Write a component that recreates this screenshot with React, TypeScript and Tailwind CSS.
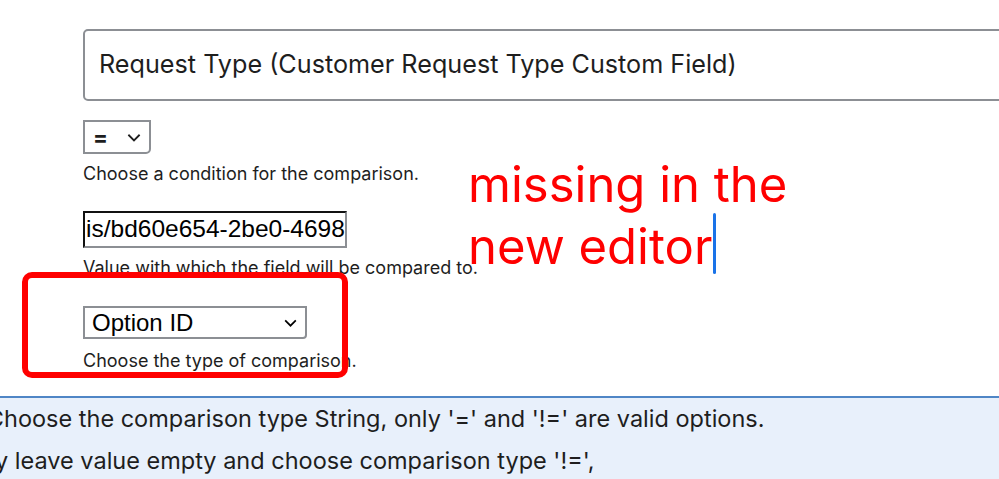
const Chevron = ({ className }: { className?: string }) => (
  <svg viewBox="0 0 16 16" className={className} fill="none" stroke="currentColor" strokeWidth="1.6">
    <path d="M3 6l5 5 5-5" />
  </svg>
);

// prefix that overflows to the left of the notice edge (text is cut in the screenshot)
const Cut = ({ children }: { children: string }) => (
  <span className="flex w-0 justify-end">{children}</span>
);

export default function App() {
  return (
    <div className="relative h-[479px] w-[999px] overflow-hidden bg-white font-['Inter',sans-serif] text-[#1e1e1e]">
      <div className="pl-[83px] pt-[29px]">
        <div className="flex h-[72px] w-[960px] items-center rounded-[5px] border-2 border-[#8c8f94] pl-[14px] text-[25.2px]">
          Request Type (Customer Request Type Custom Field)
        </div>

        <div className="mt-[19px] flex h-[34px] w-[68px] items-center justify-between rounded-br-[5px] border-2 border-[#8c8f94] pl-[8px] pr-[6px]">
          <span className="text-[22px] font-bold leading-none">=</span>
          <Chevron className="h-[18px] w-[18px]" />
        </div>
        <p className="mt-[8px] text-[18px] leading-6">Choose a condition for the comparison.</p>

        <div className="mt-[25px] flex h-[37px] w-[264px] items-center overflow-hidden border-2 border-b-[#8c8f94] border-l-[#111] border-r-[#8c8f94] border-t-[#111] pl-[1px] font-['Liberation_Sans',Arial,sans-serif] text-[24.5px] whitespace-nowrap text-black">
          is/bd60e654-2be0-4698
        </div>
        <p className="mt-[8px] text-[18px] leading-6">Value with which the field will be compared to.</p>

        <div className="mt-[26px] flex h-[33px] w-[224px] items-center justify-between rounded-br-[4px] border-2 border-[#8c8f94] pl-[7px] pr-[6px] font-['Liberation_Sans',Arial,sans-serif] text-[24px] text-black">
          <span>Option ID</span>
          <Chevron className="h-[17px] w-[17px]" />
        </div>
        <p className="mt-[10px] text-[18px] leading-6">Choose the type of comparison.</p>
      </div>

      <div className="mt-[23px] h-[100px] border-t-2 border-[#4f86c6] bg-[#e8f0fb] text-[23.5px] leading-[42px] whitespace-nowrap text-[#1e1e1e]">
        <p className="flex pl-[4px]">
          <Cut>C</Cut>
          hoose the comparison type String, only '=' and '!=' are valid options.
        </p>
        <p className="-ml-[5px] flex">
          <Cut>Simpl</Cut>
          y leave value empty and choose comparison type '!=',
        </p>
      </div>

      {/* annotation overlay */}
      <div className="absolute left-[22px] top-[272px] h-[106px] w-[326px] rounded-[10px] border-[6px] border-[#ff0000]" />
      <div className="absolute left-[468px] top-[154px] text-[49px] leading-[62px] text-[#ff0000]">
        <div>missing in the</div>
        <div className="flex items-start">
          new editor
          <span className="-mt-[3px] ml-[1px] inline-block h-[61px] w-[3px] rounded-full bg-[#1a73e8]" />
        </div>
      </div>
    </div>
  );
}
